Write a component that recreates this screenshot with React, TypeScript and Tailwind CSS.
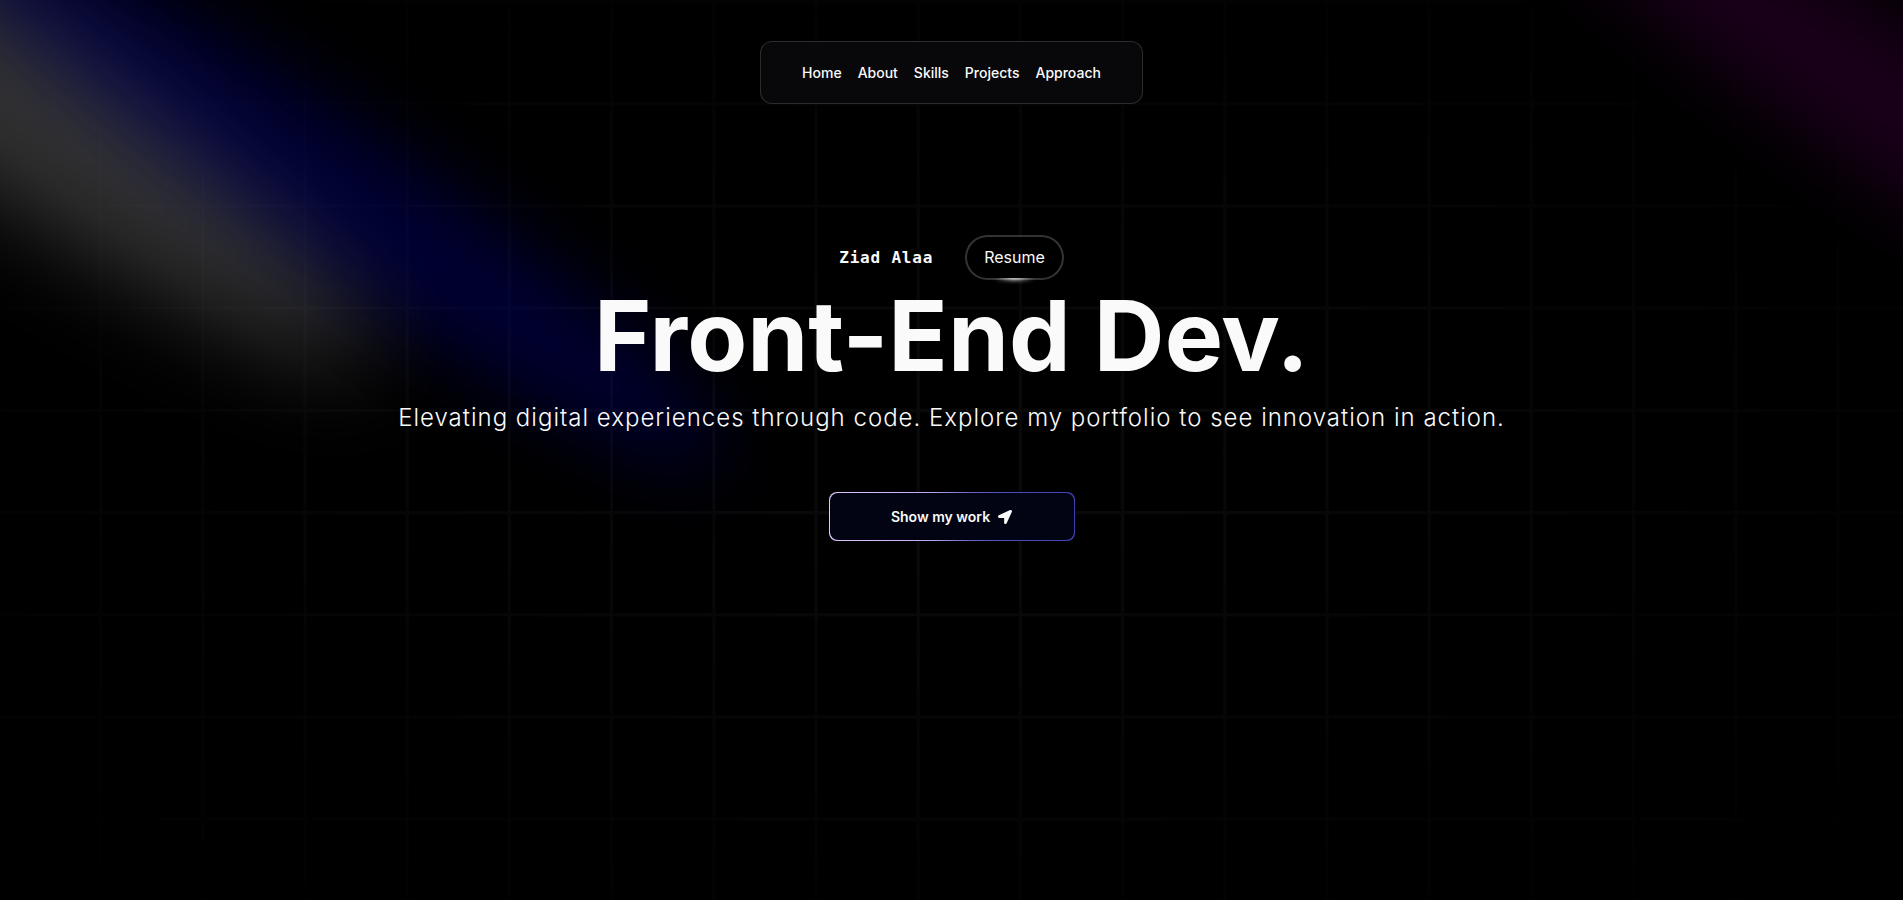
import React from "react";

const NAV = ["Home", "About", "Skills", "Projects", "Approach"];

function Spotlight({ id, className, fill }: { id: string; className: string; fill: string }) {
  return (
    <svg
      className={`pointer-events-none absolute w-[84%] -translate-x-1/2 -translate-y-[40%] ${className}`}
      viewBox="0 0 3787 2842"
      fill="none"
      aria-hidden="true"
    >
      <g filter={`url(#${id})`}>
        <ellipse
          cx="1924.71"
          cy="273.501"
          rx="1924.71"
          ry="273.501"
          transform="matrix(-0.822377 -0.568943 -0.568943 0.822377 3631.88 2291.09)"
          fill={fill}
          fillOpacity="0.2"
        />
      </g>
      <defs>
        <filter id={id} x="0.86" y="0.84" width="3785.16" height="2840.26" filterUnits="userSpaceOnUse" colorInterpolationFilters="sRGB">
          <feGaussianBlur stdDeviation="151" />
        </filter>
      </defs>
    </svg>
  );
}

function GridBackdrop() {
  return (
    <div className="pointer-events-none absolute inset-0">
      <svg className="h-full w-full" aria-hidden="true">
        <defs>
          <pattern id="grid" width="102.2" height="102.2" patternUnits="userSpaceOnUse">
            <path d="M0 1.6H100.6V102.2" fill="none" stroke="white" strokeOpacity="0.036" strokeWidth="3.2" />
          </pattern>
        </defs>
        <rect width="100%" height="100%" fill="url(#grid)" />
      </svg>
      <div className="absolute inset-0 bg-black [mask-image:radial-gradient(ellipse_at_center,transparent_20%,black)]" />
    </div>
  );
}

export default function App() {
  return (
    <div className="relative min-h-screen overflow-hidden bg-black font-['Inter',sans-serif] text-neutral-50">
      <GridBackdrop />
      <Spotlight id="glow-white" className="-left-32 -top-20 h-screen" fill="white" />
      <Spotlight id="glow-purple" className="left-full top-10 h-[80vh]" fill="purple" />
      <Spotlight id="glow-blue" className="left-80 top-28 h-[80vh]" fill="blue" />

      <header className="relative flex justify-center pt-[41px]">
        <nav className="flex items-center gap-4 rounded-xl border border-white/15 bg-[#08080a] px-[41px] py-5">
          {NAV.map((item) => (
            <a key={item} href={`#${item.toLowerCase()}`} className="text-sm font-medium leading-[21px]">
              {item}
            </a>
          ))}
        </nav>
      </header>

      <main className="relative flex flex-col items-center pt-[131px] text-center">
        <div className="flex items-center gap-8">
          <p className="font-['DejaVu_Sans_Mono',monospace] text-base font-bold tracking-wider">Ziad Alaa</p>
          <button className="relative flex rounded-full bg-white/20 p-0.5">
            <span className="absolute inset-0 rounded-full bg-[radial-gradient(20%_50%_at_50%_100%,white,transparent)] blur-[2px]" />
            <span className="relative rounded-full bg-black px-[17px] py-2 leading-[25px]">Resume</span>
          </button>
        </div>
        <h1 className="mt-[7px] text-[98px] font-bold leading-[98px]">Front-End Dev.</h1>
        <p className="mt-[17px] text-2xl font-light tracking-[1px]">
          Elevating digital experiences through code. Explore my portfolio to see innovation in action.
        </p>
        <button className="relative mt-[58px] h-[49px] w-[246px] overflow-hidden rounded-lg p-px">
          <span className="absolute inset-[-1000%] bg-[conic-gradient(from_270deg_at_50%_50%,#E2CBFF_0%,#393BB2_50%,#E2CBFF_100%)]" />
          <span className="relative flex h-full w-full items-center justify-center gap-2 rounded-lg bg-[#020414] text-sm font-semibold">
            Show my work
            <svg className="size-3.5" viewBox="0 0 512 512" fill="currentColor" aria-hidden="true">
              <path d="M444.52 3.52L28.74 195.42c-47.97 22.39-31.98 92.75 19.19 92.75h175.91v175.91c0 51.17 70.36 67.17 92.75 19.19l191.9-415.78c15.99-38.39-25.59-79.97-63.97-63.97z" />
            </svg>
          </span>
        </button>
      </main>
    </div>
  );
}
